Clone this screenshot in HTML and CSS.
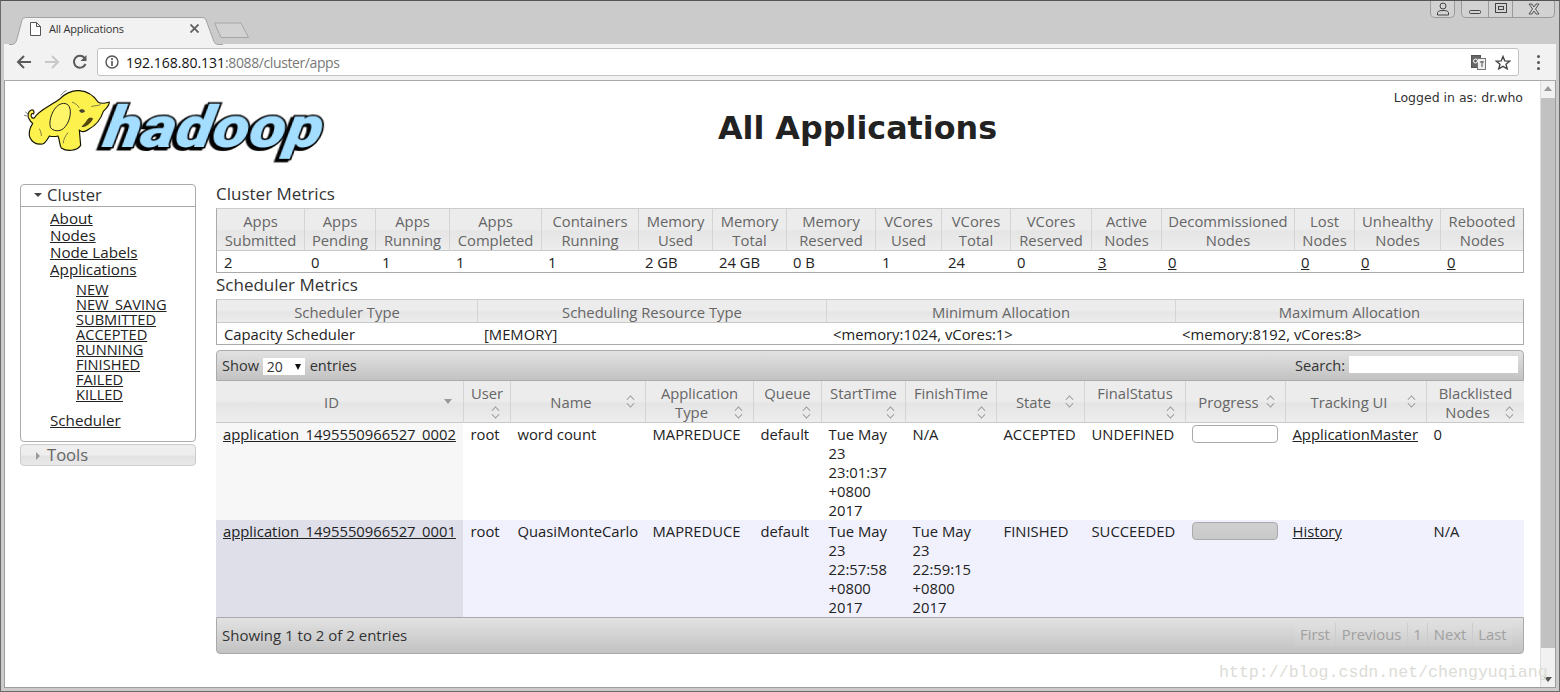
FILE: index.html
```html
<!DOCTYPE html>
<html lang="en">
<head>
<meta charset="utf-8">
<title>All Applications</title>
<link rel="stylesheet" href="styles.css">
</head>
<body>
<div class="window">
  <div class="titlebar">
    <div class="tab">
      <svg class="tab-shape" width="214" height="28" viewBox="0 0 214 28"><path d="M0 27.500H3C6 27.500 7 25 8 22L13 3C14 1 15 .5 18 .5H192C195 .5 196 1 197 3L204 22C205 25 206 27.500 209 27.500H214" fill="#f2f2f2" stroke="#a3a3a3"/></svg>
      <svg class="doc" width="11" height="14" viewBox="0 0 11 14"><path d="M.5 .5H6.500L10.500 4.500V13.500H.5Z M6.500 .5V4.500H10.500" fill="#fff" stroke="#555"/></svg>
      <span class="tab-title">All Applications</span>
      <svg class="tab-x" width="9" height="9" viewBox="0 0 9 9"><path d="M.5 .5L8.500 8.500M8.500 .5L.5 8.500" stroke="#5f5f5f" stroke-width="1.800"/></svg>
    </div>
    <svg class="newtab" width="36" height="17" viewBox="0 0 36 17"><path d="M.5 1H27L34.500 15.500H7Z" fill="#d2d2d2" stroke="#a6a6a6" stroke-linejoin="round"/></svg>
    <div class="winbtns">
      <div class="win-user"><svg width="14" height="14" viewBox="0 0 14 14"><circle cx="7" cy="4" r="3" fill="none" stroke="#444"/><path d="M1.500 13V10.500C2 9 4 8.500 7 8.500S12 9 12.500 10.500V13Z" fill="none" stroke="#444"/></svg></div>
      <div class="win-group">
        <div class="win-b win-min"><svg width="14" height="14" viewBox="0 0 14 14"><rect x="1.500" y="8.500" width="11" height="3" rx="1" fill="none" stroke="#444"/></svg></div>
        <div class="win-b win-max"><svg width="14" height="14" viewBox="0 0 14 14"><rect x="1.500" y="1.500" width="11" height="9" fill="none" stroke="#444"/><rect x="4.500" y="4.500" width="5" height="3" fill="none" stroke="#444"/></svg></div>
        <div class="win-b win-x"><svg width="14" height="12" viewBox="0 0 14 12"><path d="M2 1H5L7 4L9 1H12L8.500 6L12 11H9L7 8L5 11H2L5.500 6Z" fill="none" stroke="#555"/></svg></div>
      </div>
    </div>
  </div>
  <div class="toolbar">
    <svg class="nav" width="18" height="18" viewBox="0 0 18 18"><path d="M16 9H3M9 3L3 9L9 15" fill="none" stroke="#5a5a5a" stroke-width="2"/></svg>
    <svg class="nav" width="18" height="18" viewBox="0 0 18 18"><path d="M2 9H15M9 3L15 9L9 15" fill="none" stroke="#c8c8c8" stroke-width="2"/></svg>
    <svg class="nav" width="18" height="18" viewBox="0 0 18 18"><path d="M14.500 11A6 6 0 1 1 13.500 4.800" fill="none" stroke="#5a5a5a" stroke-width="2"/><path d="M15.500 2V8H9.500Z" fill="#5a5a5a"/></svg>
    <div class="omnibox">
      <svg width="14" height="14" viewBox="0 0 14 14"><circle cx="7" cy="7" r="6" fill="none" stroke="#555" stroke-width="1.400"/><path d="M7 6V11M7 3V5" stroke="#555" stroke-width="1.600"/></svg>
      <span class="url"><span class="host">192.168.80.131</span>:8088/cluster/apps</span>
      <svg class="translate" width="15" height="15" viewBox="0 0 15 15"><rect x=".5" y=".5" width="9" height="12" fill="#666" stroke="#555"/><rect x="6.500" y="3.500" width="8" height="11" fill="#eee" stroke="#777"/><circle cx="4.500" cy="6" r="2" fill="none" stroke="#fff"/><path d="M9 7H13M11 6V12" stroke="#555"/></svg>
      <svg width="16" height="15" viewBox="0 0 16 15"><path d="M8 1.500L9.800 5.900L14.700 6.200L11 9.200L12.200 13.800L8 11.300L3.800 13.800L5 9.200L1.300 6.200L6.200 5.900Z" fill="none" stroke="#444" stroke-width="1.400"/></svg>
    </div>
    <div class="menu-dots"><i></i><i></i><i></i></div>
  </div>
  <div class="viewport">
    <div class="page">
      <header class="head">
        <svg class="logo" width="305" height="80" viewBox="0 0 305 80">
          <text class="logo-word" x="0" y="0" transform="translate(83 62) skewX(-10) scale(1.3 1)" textLength="168" lengthAdjust="spacingAndGlyphs">hadoop</text>
          <g transform="translate(3 1) scale(.3333)">
            <path d="M22 100C15 90 18 75 28 72C36 70 38 80 34 84C30 80 26 84 28 92C30 96 34 97 37 96C50 72 85 60 112 40C125 25 150 12 172 14C195 16 215 28 228 48C238 55 250 52 262 48C262 60 252 68 244 76C238 95 222 118 200 130C190 138 178 140 172 132L176 178C165 195 135 198 118 186C112 176 114 165 108 150C100 152 90 152 82 150C76 160 72 170 62 174C45 176 32 172 24 155C18 140 24 125 32 112C28 110 24 105 22 100Z" fill="#fdf14e" stroke="#161600" stroke-width="3.500" stroke-linejoin="round"/>
            <path d="M104 62C116 50 134 48 142 62C150 80 142 112 124 128C112 138 92 135 86 125C80 112 86 80 104 62Z" fill="#fff568" stroke="#222" stroke-width="3"/>
            <path d="M180 122C194 122 206 110 212 98C206 94 200 96 197 101C192 110 186 115 180 122Z" fill="#5b4a00" stroke="#222" stroke-width="2"/>
            <path d="M172 74C178 68 186 70 188 76C182 82 176 80 172 74Z" fill="#443" stroke="#222" stroke-width="1.500"/>
            <path d="M208 62C218 58 226 60 236 56M116 28C122 20 128 16 134 14M150 48C160 52 168 58 172 66M10 78L18 84M6 88L16 90M52 128C56 136 58 142 58 150M138 140C130 150 124 160 124 172" fill="none" stroke="#444" stroke-width="2"/>
          </g>
        </svg>
        <h1 class="page-title">All Applications</h1>
        <div class="logged">Logged in as: dr.who</div>
      </header>
      <div class="content">
        <nav class="side">
          <section class="acc-open">
            <h3 class="acc-h"><span class="caret-down"></span>Cluster</h3>
            <div class="acc-body">
              <ul class="menu">
                <li><a href="#">About</a></li>
                <li><a href="#">Nodes</a></li>
                <li><a href="#">Node Labels</a></li>
                <li><a href="#">Applications</a>
                  <ul class="submenu">
                    <li><a href="#">NEW</a></li>
                    <li><a href="#">NEW_SAVING</a></li>
                    <li><a href="#">SUBMITTED</a></li>
                    <li><a href="#">ACCEPTED</a></li>
                    <li><a href="#">RUNNING</a></li>
                    <li><a href="#">FINISHED</a></li>
                    <li><a href="#">FAILED</a></li>
                    <li><a href="#">KILLED</a></li>
                  </ul>
                </li>
                <li class="menu-sched"><a href="#">Scheduler</a></li>
              </ul>
            </div>
          </section>
          <h3 class="acc-closed"><span class="caret-right"></span>Tools</h3>
        </nav>
        <main class="main">
          <h3 class="section-h">Cluster Metrics</h3>
          <table class="info t-metrics">
            <thead><tr>
              <th class="m1">Apps Submitted</th><th class="m2">Apps Pending</th><th class="m3">Apps Running</th><th class="m4">Apps Completed</th><th class="m5">Containers Running</th><th class="m6">Memory Used</th><th class="m7">Memory Total</th><th class="m8">Memory Reserved</th><th class="m9">VCores Used</th><th class="m10">VCores Total</th><th class="m11">VCores Reserved</th><th class="m12">Active Nodes</th><th class="m13">Decommissioned Nodes</th><th class="m14">Lost Nodes</th><th class="m15">Unhealthy Nodes</th><th class="m16">Rebooted Nodes</th>
            </tr></thead>
            <tbody><tr>
              <td>2</td><td>0</td><td>1</td><td>1</td><td>1</td><td>2 GB</td><td>24 GB</td><td>0 B</td><td>1</td><td>24</td><td>0</td><td><a href="#">3</a></td><td><a href="#">0</a></td><td><a href="#">0</a></td><td><a href="#">0</a></td><td><a href="#">0</a></td>
            </tr></tbody>
          </table>
          <h3 class="section-h section-h2">Scheduler Metrics</h3>
          <table class="info t-sched">
            <thead><tr><th class="s1">Scheduler Type</th><th class="s2">Scheduling Resource Type</th><th class="s2">Minimum Allocation</th><th>Maximum Allocation</th></tr></thead>
            <tbody><tr><td>Capacity Scheduler</td><td>[MEMORY]</td><td>&lt;memory:1024, vCores:1&gt;</td><td>&lt;memory:8192, vCores:8&gt;</td></tr></tbody>
          </table>
          <div class="apps">
            <div class="apps-top">
              <label class="show">Show <span class="select">20<span class="sel-arrow"></span></span> entries</label>
              <label class="search">Search: <input class="search-in" type="text" aria-label="Search"></label>
            </div>
            <table class="t-apps">
              <thead><tr>
                <th class="a1 sorted"><span class="th-t">ID</span><span class="s-down"></span></th>
                <th class="a2 two"><span class="th-t">User</span><span class="s-both s-low"></span></th>
                <th class="a3"><span class="th-t">Name</span><span class="s-both"></span></th>
                <th class="a4 two"><span class="th-t">Application <span class="th-last">Type</span></span><span class="s-both s-low"></span></th>
                <th class="a5 two"><span class="th-t">Queue</span><span class="s-both s-low"></span></th>
                <th class="a6 two"><span class="th-t">StartTime</span><span class="s-both s-low"></span></th>
                <th class="a7 two"><span class="th-t">FinishTime</span><span class="s-both s-low"></span></th>
                <th class="a8"><span class="th-t">State</span><span class="s-both"></span></th>
                <th class="a9 two"><span class="th-t">FinalStatus</span><span class="s-both s-low"></span></th>
                <th class="a10"><span class="th-t">Progress</span><span class="s-both"></span></th>
                <th class="a11"><span class="th-t">Tracking UI</span><span class="s-both"></span></th>
                <th class="a12 two"><span class="th-t">Blacklisted <span class="th-last">Nodes</span></span><span class="s-both s-low"></span></th>
              </tr></thead>
              <tbody>
                <tr class="odd">
                  <td class="idc"><a href="#">application_1495550966527_0002</a></td><td>root</td><td>word count</td><td>MAPREDUCE</td><td>default</td><td>Tue May 23 23:01:37 +0800 2017</td><td>N/A</td><td>ACCEPTED</td><td>UNDEFINED</td><td><div class="bar"></div></td><td><a href="#">ApplicationMaster</a></td><td>0</td>
                </tr>
                <tr class="even">
                  <td class="idc"><a href="#">application_1495550966527_0001</a></td><td>root</td><td>QuasiMonteCarlo</td><td>MAPREDUCE</td><td>default</td><td>Tue May 23 22:57:58 +0800 2017</td><td>Tue May 23 22:59:15 +0800 2017</td><td>FINISHED</td><td>SUCCEEDED</td><td><div class="bar bar-full"></div></td><td><a href="#">History</a></td><td>N/A</td>
                </tr>
              </tbody>
            </table>
            <div class="apps-bottom">
              <span class="showing">Showing 1 to 2 of 2 entries</span>
              <div class="pager"><span>First</span><span>Previous</span><span>1</span><span>Next</span><span>Last</span></div>
            </div>
          </div>
        </main>
      </div>
    </div>
    <div class="scrollbar">
      <span class="sb-up"></span>
      <div class="sb-thumb"></div>
      <span class="sb-down"></span>
    </div>
    <div class="watermark">http://blog.csdn.net/chengyuqiang</div>
  </div>
</div>
</body>
</html>
```

FILE: styles.css
```css
* { box-sizing: border-box; }
html, body { margin: 0; height: 100%; overflow: hidden; }
body { font-family: "Open Sans", "Noto Sans", sans-serif; color: #222; background: #fff; }
a { color: #222; }
.window { width: 1560px; height: 692px; display: flex; flex-direction: column; background: #cbcbcb; border: 1px solid #6a6a6a; border-top-color: #555; padding: 0 3px 3px; position: relative; }
.titlebar { height: 43px; flex: none; display: flex; align-items: flex-end; position: relative; }
.tab { position: relative; width: 214px; height: 27px; margin-left: 7px; padding-bottom: 4px; display: flex; align-items: center; }
.tab-shape { position: absolute; left: -2px; top: 0; }
.doc { position: relative; margin-left: 19px; }
.tab-title { position: relative; margin-left: 8px; font: 11px "Open Sans", sans-serif; color: #333; letter-spacing: -.2px; width: 133px; }
.tab-x { position: relative; margin-left: 8px; }
.newtab { margin-left: -11px; margin-bottom: 5px; position: relative; }
.winbtns { margin-left: auto; align-self: flex-start; display: flex; gap: 6px; margin-right: 1px; }
.win-user, .win-group { height: 17px; border: 1px solid #9a9a9a; border-top: 0; border-radius: 0 0 5px 5px; background: #d2d2d2; display: flex; }
.win-user { width: 25px; justify-content: center; align-items: center; }
.win-b { display: flex; align-items: center; justify-content: center; border-left: 1px solid #9a9a9a; }
.win-min { width: 26px; border-left: 0; }
.win-max { width: 24px; }
.win-x { width: 42px; }
.toolbar { height: 37px; flex: none; background: #f2f2f2; display: flex; align-items: center; padding: 0 13px 0 11px; gap: 10px; border-bottom: 1px solid #a9a9a9; }
.omnibox { height: 28px; flex: 1; margin-left: -2px; background: #fff; border: 1px solid #c2c2c2; border-radius: 3px; display: flex; align-items: center; padding: 0 7px; gap: 5px; }
.url { font: 14px "Open Sans", sans-serif; color: #777; flex: 1; margin-left: 2px; letter-spacing: -.4px; }
.host { color: #111; letter-spacing: 0; }
.translate { margin-right: 4px; }
.menu-dots { width: 10px; margin-left: 4px; display: flex; flex-direction: column; gap: 3px; align-items: center; }
.menu-dots i { width: 3px; height: 3px; border-radius: 50%; background: #555; }
.viewport { flex: 1; min-height: 0; display: flex; position: relative; border: 1px solid #9d9d9d; border-top: 0; background: #fff; }
.page { flex: 1; min-width: 0; padding: 0 17px 0 15px; font-size: 14px; overflow: hidden; }
.head { height: 102px; display: flex; position: relative; }
.logo { margin: 4px 0 0 -1px; flex: none; overflow: visible; }
.page-title { position: absolute; left: 0; right: 0; top: 25px; margin: 0 0 0 172px; text-align: center; font: bold 31.800px/44px "DejaVu Sans", sans-serif; color: #222; }
.logged { margin-left: auto; padding-top: 9px; font: 12.500px "DejaVu Sans", sans-serif; color: #333; position: relative; }
.logo-word { font-family: Roboto, "Liberation Sans", sans-serif; font-weight: 900; font-style: italic; font-size: 58px; fill: #a3ddff; stroke: #000; stroke-width: 3px; paint-order: stroke; stroke-linejoin: miter; filter: drop-shadow(-2px 2px 0 #000); }
.content { display: flex; gap: 21px; }
.side { width: 176px; flex: none; padding-top: 1px; }
.acc-open { border: 1px solid #aaa; border-radius: 4px; height: 258px; }
.acc-h { margin: 0; height: 22px; border-bottom: 1px solid #aaa; font-weight: 400; font-size: 16.600px; line-height: 20px; padding-left: 26px; position: relative; color: #333; }
.caret-down { position: absolute; left: 13px; top: 8px; border: 4px solid transparent; border-top-color: #444; border-bottom: 0; }
.caret-right { position: absolute; left: 15px; top: 7px; border: 4px solid transparent; border-left-color: #999; border-right: 0; }
.menu { list-style: none; margin: 0; padding: 3px 0 0 29px; font-size: 15.200px; line-height: 17px; }
.menu a { display: inline-block; }
.submenu { list-style: none; margin: 0; padding: 4px 0 0 26px; font-size: 14.600px; line-height: 15px; }
.menu-sched { margin-top: 10px; }
.acc-closed { margin: 2px 0 0; height: 22px; border: 1px solid #ccc; border-radius: 4px; background: linear-gradient(#eee 50%, #e2e2e2 55%, #e8e8e8); font-weight: 400; font-size: 16.600px; line-height: 19px; padding-left: 26px; position: relative; color: #666; }
.main { width: 1308px; flex: none; margin-top: -1px; margin-left: -1px; }
.section-h { margin: 0; height: 26px; font-weight: 400; font-size: 17px; line-height: 24px; color: #333; }
table { border-collapse: separate; border-spacing: 0; table-layout: fixed; width: 100%; }
.info { border: 1px solid #ccc; border-bottom-color: #aaa; border-left-color: #aaa; border-right-color: #aaa; font-size: 14.800px; }
th { font-weight: 400; color: #666; background: linear-gradient(#ececec 0, #ececec 48%, #e5e5e5 55%, #ededed 100%); border-left: 1px solid #d4d4d4; border-bottom: 1px solid #c8c8c8; padding: 3px 4px 0; line-height: 19px; }
th:first-child { border-left: 0; }
.t-metrics th { height: 41px; padding: 3px 2px 0; }
.t-metrics td { height: 21px; padding: 1px 7px 0; line-height: 20px; }
.t-sched th { height: 22px; padding: 2px 4px 0; line-height: 20px; }
.t-sched td { height: 21px; padding: 1px 7px 0; line-height: 20px; }
td { color: #222; }
.m1 { width: 87px; } .m2 { width: 71px; } .m3 { width: 74px; } .m4 { width: 92px; } .m5 { width: 97px; } .m6 { width: 74px; } .m7 { width: 74px; } .m8 { width: 89px; } .m9 { width: 66px; } .m10 { width: 69px; } .m11 { width: 81px; } .m12 { width: 70px; } .m13 { width: 133px; } .m14 { width: 60px; } .m15 { width: 86px; }
.s1 { width: 260px; } .s2 { width: 349px; }
.apps { margin-top: 5px; font-size: 14.800px; }
.apps-top { height: 31px; border: 1px solid #aaa; border-radius: 4px 4px 0 0; background: linear-gradient(#e2e2e2, #c2c2c2); display: flex; justify-content: space-between; align-items: center; padding: 0 5px 2px; color: #333; font-size: 14.600px; }
.select { display: inline-block; width: 42px; height: 17px; background: #fff; line-height: 17px; padding-left: 4px; margin: 0 1px 0 0; position: relative; vertical-align: -1px; font-size: 14px; }
.sel-arrow { position: absolute; right: 4px; top: 6px; border: 3px solid transparent; border-top: 6px solid #111; border-bottom: 0; }
.search { display: flex; align-items: center; gap: 4px; }
.search-in { width: 169px; height: 17px; background: #fff; border: 0; padding: 0; margin: 0; }
.t-apps th { height: 42px; padding: 2px 0 0; position: relative; }
.th-t { display: block; padding: 0 14px 0 0; }
.two .th-t { padding: 0; position: relative; top: 1px; }
.two { vertical-align: top; }
.th-last { display: inline-block; padding-right: 16px; }
.a1 { width: 247px; } .a2 { width: 47px; } .a3 { width: 135px; } .a4 { width: 108px; } .a5 { width: 68px; } .a6 { width: 84px; } .a7 { width: 91px; } .a8 { width: 88px; } .a9 { width: 101px; } .a10 { width: 100px; } .a11 { width: 141px; }
.a1 .th-t { padding-right: 16px; }
.s-both { position: absolute; right: 11px; top: 14px; width: 8px; height: 12px; }
.s-both::before, .s-both::after { content: ""; position: absolute; left: 1px; width: 6px; height: 6px; border-left: 1px solid #8a8a8a; border-top: 1px solid #8a8a8a; transform: rotate(45deg) scale(.8); }
.s-both::before { top: 1px; }
.s-both::after { top: 5px; transform: rotate(225deg) scale(.8); }
.s-low { top: 25px; }
.s-down { position: absolute; right: 11px; top: 18px; border: 4px solid transparent; border-top: 5px solid #999; border-bottom: 0; }
.t-apps td { height: 97px; vertical-align: top; padding: 2px 7px 0 7.500px; line-height: 19px; overflow: hidden; }
.odd td { background: #fff; }
.odd .idc { background: #f7f7f7; }
.even td { background: #f1f1fd; }
.even .idc { background: #dedfe8; }
.t-apps .idc { padding-left: 7px; }
.bar { height: 18px; width: 86px; margin-left: -1px; border: 1px solid #aaa; border-radius: 4px; background: #fff; }
.bar-full { background: linear-gradient(#d0d0d0, #c8c8c8); }
.apps-bottom { height: 37px; border: 1px solid #aaa; border-radius: 0 0 4px 4px; background: linear-gradient(#e2e2e2, #c2c2c2); display: flex; justify-content: space-between; align-items: center; padding: 0 11px 2px 5px; color: #333; font-size: 15px; }
.pager { display: flex; color: #a0a0a0; border-radius: 3px; font-size: 14.800px; }
.pager span { padding: 0 5.500px; height: 23px; line-height: 23px; border-left: 1px solid #ccc; background: rgba(255,255,255,.08); }
.pager span:first-child { border-left: 0; }
.scrollbar { width: 15px; flex: none; background: #f1f1f1; border-left: 1px solid #ddd; display: flex; flex-direction: column; align-items: center; position: relative; margin-left: auto; }
.sb-up { margin-top: 5px; border: 4px solid transparent; border-bottom: 5px solid #999; border-top: 0; }
.sb-thumb { width: 100%; height: 550px; margin-top: 7px; background: #c1c1c1; }
.sb-down { margin-top: auto; margin-bottom: 5px; border: 4px solid transparent; border-top: 5px solid #555; border-bottom: 0; }
.watermark { position: absolute; left: 1214px; top: 582px; font: 16.600px "Liberation Mono", monospace; color: #dcdcd6; white-space: nowrap; }
```
